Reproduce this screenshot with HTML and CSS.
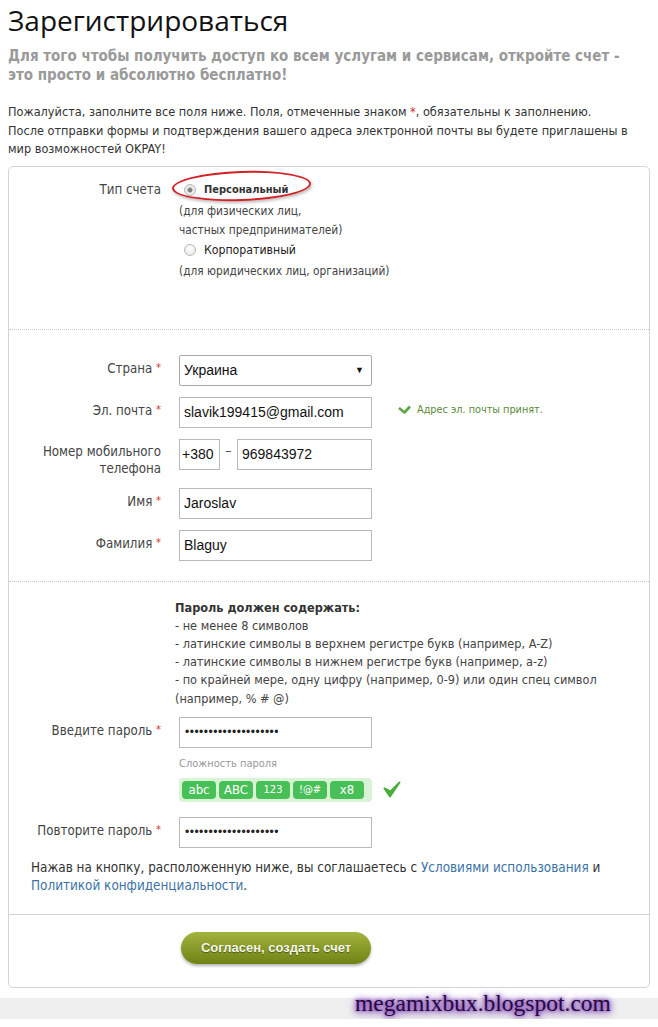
FILE: index.html
```html
<!DOCTYPE html>
<html lang="ru">
<head>
  <meta charset="UTF-8" />
  <meta name="viewport" content="width=device-width, initial-scale=1.0" />
  <title>Зарегистрироваться</title>
  <link rel="stylesheet" href="styles.css">
</head>
<body>
  <h1 class="title">Зарегистрироваться</h1>
  <p class="lead">Для того чтобы получить доступ ко всем услугам и сервисам, откройте счет -<br>это просто и абсолютно бесплатно!</p>
  <p class="intro">Пожалуйста, заполните все поля ниже. Поля, отмеченные знаком <span class="req">*</span>, обязательны к заполнению.<br>После отправки формы и подтверждения вашего адреса электронной почты вы будете приглашены в мир возможностей OKPAY!</p>

  <form class="card">
    <div class="sec sec-type">
      <div class="row">
        <div class="lbl">Тип счета</div>
        <div class="field types">
          <label class="opt marked">
            <span class="radio checked"></span>
            <span class="opt-name">Персональный</span>
            <span class="ring"></span>
          </label>
          <div class="hint">(для физических лиц,<br>частных предпринимателей)</div>
          <label class="opt">
            <span class="radio"></span>
            <span class="opt-name">Корпоративный</span>
          </label>
          <div class="hint">(для юридических лиц, организаций)</div>
        </div>
      </div>
    </div>

    <div class="sec sec-info">
      <div class="row">
        <div class="lbl">Страна <span class="req">*</span></div>
        <div class="field">
          <div class="input select">Украина<span class="arrow">▼</span></div>
        </div>
      </div>
      <div class="row">
        <div class="lbl">Эл. почта <span class="req">*</span></div>
        <div class="field inline">
          <div class="input">slavik199415@gmail.com</div>
          <div class="ok">
            <svg width="13" height="9" viewBox="0 0 13 9"><path d="M1 3 L6.5 7.5 L12 1.5" fill="none" stroke="#5fa742" stroke-width="2.6" stroke-linejoin="round"/></svg>
            Адрес эл. почты принят.
          </div>
        </div>
      </div>
      <div class="row">
        <div class="lbl">Номер мобильного<br>телефона</div>
        <div class="field phone">
          <div class="input code">+380</div>
          <span class="dash">–</span>
          <div class="input num">969843972</div>
        </div>
      </div>
      <div class="row">
        <div class="lbl">Имя <span class="req">*</span></div>
        <div class="field"><div class="input">Jaroslav</div></div>
      </div>
      <div class="row">
        <div class="lbl">Фамилия <span class="req">*</span></div>
        <div class="field"><div class="input">Blaguy</div></div>
      </div>
    </div>

    <div class="sec sec-pass">
      <div class="rules">
        <b>Пароль должен содержать:</b><br>
        - не менее 8 символов<br>
        - латинские символы в верхнем регистре букв (например, A-Z)<br>
        - латинские символы в нижнем регистре букв (например, a-z)<br>
        - по крайней мере, одну цифру (например, 0-9) или один спец символ<br>
        (например, % # @)
      </div>
      <div class="row row-pass">
        <div class="lbl">Введите пароль <span class="req">*</span></div>
        <div class="field">
          <div class="input dots">••••••••••••••••••••</div>
          <div class="strength-title">Сложность пароля</div>
          <div class="strength">
            <div class="pills">
              <span class="pill">abc</span>
              <span class="pill">ABC</span>
              <span class="pill small">123</span>
              <span class="pill small">!@#</span>
              <span class="pill">x8</span>
            </div>
            <svg class="tick" width="18" height="17" viewBox="0 0 18 17"><path d="M1.5 7.5 L7 15.5 L16.5 1.5 L7.5 10.5 Z" fill="#4cae3c" stroke="#4cae3c" stroke-width="2" stroke-linejoin="round"/></svg>
          </div>
        </div>
      </div>
      <div class="row">
        <div class="lbl">Повторите пароль <span class="req">*</span></div>
        <div class="field"><div class="input dots">••••••••••••••••••••</div></div>
      </div>
      <p class="terms">Нажав на кнопку, расположенную ниже, вы соглашаетесь с <a href="#">Условиями использования</a> и <a href="#">Политикой конфиденциальности</a>.</p>
    </div>

    <div class="sec sec-submit">
      <button type="button" class="submit">Согласен, создать счет</button>
    </div>
  </form>

  <div class="band">
    <span class="mark">megamixbux.blogspot.com</span>
  </div>
</body>
</html>
```

FILE: styles.css
```css
* {
  margin: 0;
  padding: 0;
  box-sizing: border-box;
}
body {
  background-color: #fff;
  color: #333;
  font-family: "DejaVu Sans Condensed", "Open Sans", sans-serif;
  font-size: 12.6px;
  margin: 0;
  padding: 0 8px;
}
.title {
  font-family: "Open Sans", sans-serif;
  font-weight: 400;
  font-size: 28px;
  line-height: 38px;
  color: #111;
  padding-top: 1px;
}
.lead {
  margin-top: 8px;
  font-weight: bold;
  font-size: 15px;
  line-height: 19px;
  color: #9a9a9a;
}
.intro {
  margin-top: 18px;
  line-height: 18.5px;
  color: #333;
}
.req {
  color: #c33;
}
.card {
  margin-top: 7px;
  border: 1px solid #d4d4d4;
  border-radius: 5px;
}
.sec {
  border-top: 1px dotted #c8c8c8;
}
.sec:first-child {
  border-top: none;
}
.sec-type {
  padding: 13px 0 37px;
}
.sec-type .lbl {
  padding-top: 1px;
}
.sec-info {
  padding: 25px 0 20px;
}
.sec-pass {
  padding: 17px 0 18px;
}
.sec-submit {
  border-top: 1px solid #d0d0d0;
  padding: 17px 0 23px 172px;
}
.row {
  display: grid;
  grid-template-columns: 152px 1fr;
  column-gap: 18px;
  margin-bottom: 11px;
}
.row-pass {
  margin-bottom: 15px;
}
.sec-info .row:last-child {
  margin-bottom: 0;
}
.lbl {
  text-align: right;
  padding-top: 4px;
  line-height: 17px;
  color: #444;
  font-size: 13.2px;
}
.lbl .req {
  font-size: 11px;
  vertical-align: 2px;
}
.input {
  width: 193px;
  height: 31px;
  border: 1px solid #b9b9b9;
  padding: 0 4px;
  font-family: "Liberation Sans", Arial, sans-serif;
  font-size: 14px;
  line-height: 29px;
  color: #111;
  background: #fff;
}
.select {
  position: relative;
  border-radius: 2px;
  border-color: #a9a9a9;
}
.arrow {
  position: absolute;
  right: 7px;
  top: 0;
  font-size: 9px;
}
.inline {
  display: flex;
  align-items: center;
  gap: 26px;
}
.ok {
  display: flex;
  align-items: center;
  gap: 6px;
  color: #5a8a3a;
  font-size: 10.8px;
  margin-top: -5px;
}
.phone {
  display: flex;
  align-items: flex-start;
}
.code {
  width: 41px;
  padding: 0 2px;
}
.dash {
  width: 17px;
  text-align: center;
  line-height: 22px;
  font-size: 14px;
  color: #555;
}
.num {
  width: 135px;
}
.types {
  position: relative;
}
.opt {
  display: flex;
  align-items: center;
  gap: 8px;
  padding-left: 5px;
  height: 20px;
  position: relative;
}
.radio {
  width: 12px;
  height: 12px;
  border-radius: 50%;
  border: 1px solid #b8b8b8;
  background: radial-gradient(circle at 50% 40%, #fff 0, #e4e4e4 100%);
}
.radio.checked {
  background: radial-gradient(circle, #777 0, #888 2px, #eee 3px, #e0e0e0 100%);
}
.opt-name {
  font-size: 12.2px;
  color: #222;
}
.marked .opt-name {
  font-weight: bold;
  font-size: 11px;
  color: #333;
}
.ring {
  position: absolute;
  left: -7px;
  top: -9px;
  width: 139px;
  height: 30px;
  border: 2px solid #d42027;
  border-radius: 50%;
  box-shadow: 1px 2px 3px rgba(0, 0, 0, 0.25);
  transform: rotate(-2deg);
}
.hint {
  line-height: 19px;
  font-size: 11.8px;
  color: #444;
  margin-top: 2px;
}
.rules {
  margin-left: 166px;
  line-height: 18.2px;
  color: #444;
  margin-bottom: 9px;
}
.rules b {
  color: #333;
}
.dots {
  font-size: 12px;
  letter-spacing: 0.5px;
  padding-left: 5px;
  color: #222;
}
.strength-title {
  margin-top: 9px;
  color: #999;
  font-size: 11px;
  line-height: 14px;
}
.strength {
  display: flex;
  align-items: center;
  gap: 11px;
  margin-top: 7px;
}
.pills {
  display: flex;
  gap: 3px;
  width: 193px;
  height: 24px;
  padding: 3px;
  border-radius: 4px;
  background: #d9f3d5;
}
.pill {
  background: #48c058;
  color: #fff;
  border-radius: 4px;
  height: 18px;
  line-height: 18px;
  width: 34px;
  text-align: center;
  font-size: 13px;
}
.pill.small {
  font-size: 11px;
}
.terms {
  margin: 7px 0 0 22px;
  line-height: 18.5px;
  font-size: 13.4px;
  color: #333;
}
.terms a {
  color: #3a72a5;
  text-decoration: none;
}
.submit {
  width: 190px;
  height: 32px;
  border: none;
  border-radius: 16px;
  background: linear-gradient(#a2b23e, #6f8214);
  box-shadow: 0 2px 3px rgba(0, 0, 0, 0.3);
  color: #f4f4e6;
  font-family: "Liberation Sans", Arial, sans-serif;
  font-weight: bold;
  font-size: 13px;
  text-shadow: 0 1px 1px rgba(0, 0, 0, 0.4);
  cursor: pointer;
}
.band {
  margin: 10px -8px 0;
  height: 21px;
  background: #efefef;
  position: relative;
}
.mark {
  position: absolute;
  left: 355px;
  top: -8px;
  font-family: "Liberation Serif", serif;
  font-size: 23.5px;
  color: #25093f;
  text-shadow: 0 0 3px #8a4cc0, 0 0 6px #7a3ab0, 0 2px 9px #6a2aa0;
  white-space: nowrap;
}
```
